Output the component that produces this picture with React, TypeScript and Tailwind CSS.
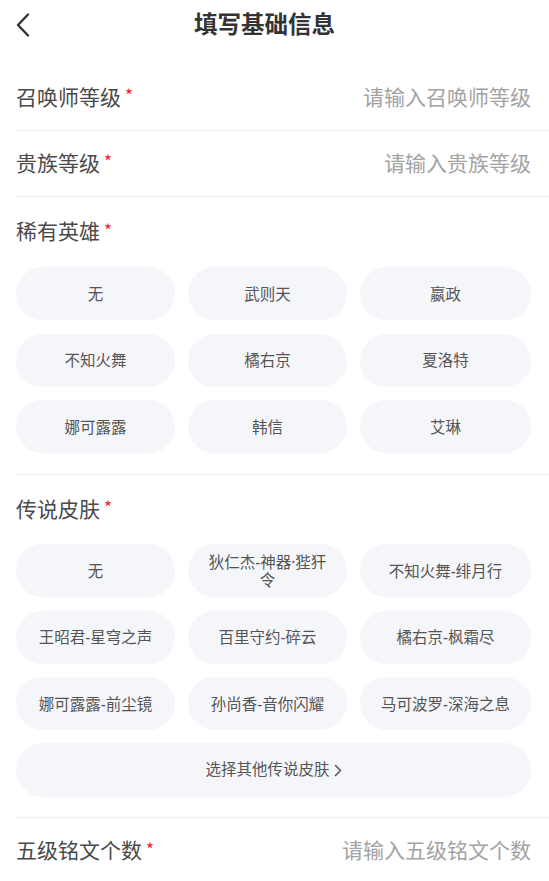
const RARE_HEROES = ['无', '武则天', '嬴政', '不知火舞', '橘右京', '夏洛特', '娜可露露', '韩信', '艾琳']

const LEGEND_SKINS = [
  '无',
  '狄仁杰-神器·狴犴令',
  '不知火舞-绯月行',
  '王昭君-星穹之声',
  '百里守约-碎云',
  '橘右京-枫霜尽',
  '娜可露露-前尘镜',
  '孙尚香-音你闪耀',
  '马可波罗-深海之息'
]

function Star() {
  return (
    <span className="ml-[4px] inline-block -translate-y-[3px] font-['Noto_Sans_CJK_SC',sans-serif] text-[17px] leading-none text-[#f5222d]">
      *
    </span>
  )
}

function InputRow({ label, placeholder, last }: { label: string; placeholder: string; last?: boolean }) {
  return (
    <div className={`ml-[16px] flex h-[66px] items-center justify-between pr-[18px] ${last ? '' : 'border-b border-[#ededed]'}`}>
      <div className="flex items-center text-[21px] text-[#4a4a4a]">
        <span>{label}</span>
        <Star />
      </div>
      <span className="text-[21px] text-[#a3a3a3]">{placeholder}</span>
    </div>
  )
}

function Pill({ text }: { text: string }) {
  return (
    <div className="flex h-[53px] items-center justify-center rounded-full bg-[#f5f6fa] px-[16px] text-center text-[15.5px] leading-[18px] text-[#555555]">
      {text}
    </div>
  )
}

function PillGrid({ items }: { items: string[] }) {
  return (
    <div className="grid grid-cols-[159px_159px_1fr] gap-x-[13px] gap-y-[13.5px]">
      {items.map(item => (
        <Pill key={item} text={item} />
      ))}
    </div>
  )
}

export default function App() {
  return (
    <div className="min-h-[881px] w-full bg-white font-['Noto_Sans','Noto_Sans_CJK_SC',sans-serif]">
      {/* Header */}
      <div className="flex h-[49px] items-center px-[16px]">
        <svg width="14" height="24" viewBox="0 0 14 24" fill="none" className="shrink-0">
          <path d="M12 1.5 L2 12 L12 22.5" stroke="#333333" strokeWidth="2.4" strokeLinecap="round" strokeLinejoin="round" />
        </svg>
        <div className="flex flex-1 justify-center pr-[34px] text-[23.5px] font-bold text-[#333333]">填写基础信息</div>
      </div>

      <div className="pt-[16px]">
        <InputRow label="召唤师等级" placeholder="请输入召唤师等级" />
        <InputRow label="贵族等级" placeholder="请输入贵族等级" />

        {/* Rare heroes */}
        <div className="ml-[16px] border-b border-[#ededed] pr-[18px] pb-[21px]">
          <div className="flex h-[70px] items-center text-[21px] text-[#4a4a4a]">
            <span>稀有英雄</span>
            <Star />
          </div>
          <PillGrid items={RARE_HEROES} />
        </div>

        {/* Legend skins */}
        <div className="ml-[16px] border-b border-[#ededed] pr-[18px] pb-[20px]">
          <div className="flex h-[69px] items-center text-[21px] text-[#4a4a4a]">
            <span>传说皮肤</span>
            <Star />
          </div>
          <PillGrid items={LEGEND_SKINS} />
          <div className="mt-[13px] flex h-[54px] items-center justify-center gap-[4px] rounded-full bg-[#f5f6fa] text-[15.5px] text-[#555555]">
            <span>选择其他传说皮肤</span>
            <svg width="8" height="13" viewBox="0 0 8 13" fill="none">
              <path d="M1.5 1.5 L6.5 6.5 L1.5 11.5" stroke="#555555" strokeWidth="1.5" strokeLinecap="round" strokeLinejoin="round" />
            </svg>
          </div>
        </div>

        <InputRow label="五级铭文个数" placeholder="请输入五级铭文个数" last />
      </div>
    </div>
  )
}
